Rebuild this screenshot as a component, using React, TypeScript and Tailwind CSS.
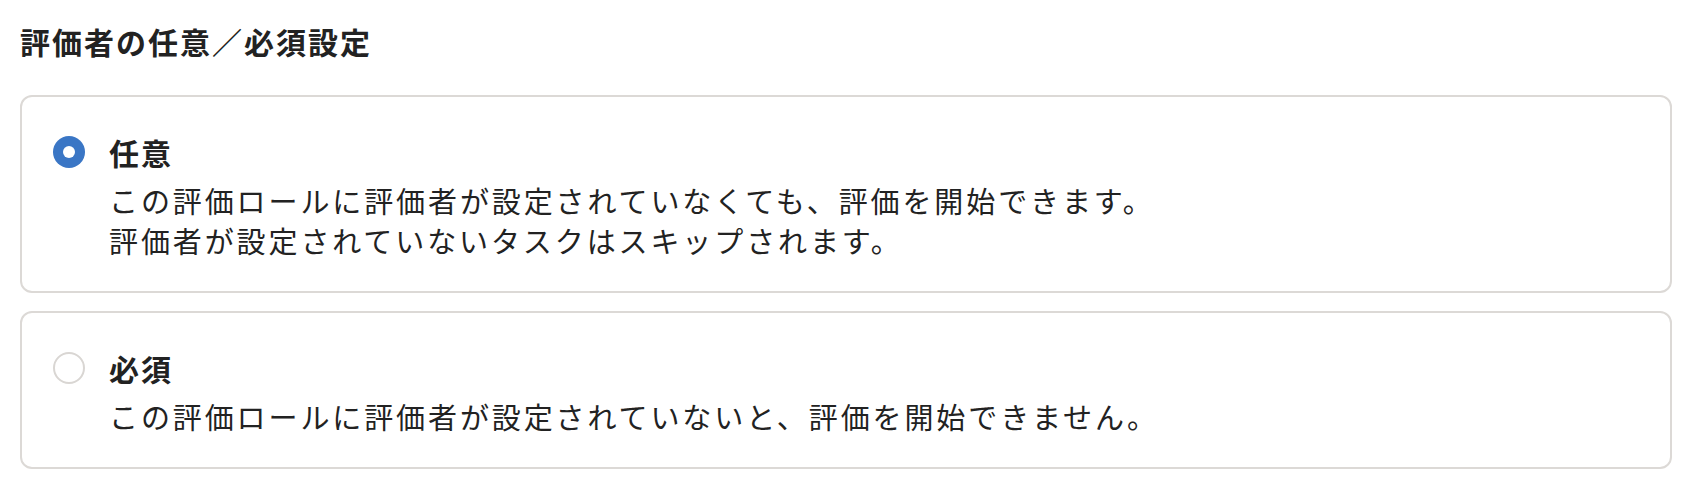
import React, { useState } from 'react';

type Option = {
  value: 'optional' | 'required';
  label: string;
  lines: string[];
};

const options: Option[] = [
  {
    value: 'optional',
    label: '任意',
    lines: [
      'この評価ロールに評価者が設定されていなくても、評価を開始できます。',
      '評価者が設定されていないタスクはスキップされます。',
    ],
  },
  {
    value: 'required',
    label: '必須',
    lines: ['この評価ロールに評価者が設定されていないと、評価を開始できません。'],
  },
];

const font = "font-['Noto_Sans_CJK_JP','Noto_Sans',sans-serif]";

const RadioDot = ({ checked }: { checked: boolean }) =>
  checked ? (
    <span className="mt-[4px] flex h-[32px] w-[32px] shrink-0 items-center justify-center rounded-full bg-[#3a76c5]">
      <span className="h-[12px] w-[12px] rounded-full bg-white" />
    </span>
  ) : (
    <span className="mt-[4px] h-[32px] w-[32px] shrink-0 rounded-full border-2 border-[#d9d6d3] bg-white" />
  );

export default function App() {
  const [value, setValue] = useState<Option['value']>('optional');

  return (
    <div className={`min-h-screen bg-white pl-[20px] pr-[30px] pt-[21px] text-[#222] ${font}`}>
      <h2 className="mb-[34px] text-[30px] font-bold leading-[40px] tracking-[2px]">
        評価者の任意／必須設定
      </h2>

      <div className="flex flex-col gap-[18px]">
        {options.map((opt) => {
          const checked = value === opt.value;
          return (
            <label
              key={opt.value}
              onClick={() => setValue(opt.value)}
              className="flex cursor-pointer gap-[24px] rounded-[12px] border-2 border-[#dcd9d6] bg-white pb-[31px] pl-[31px] pr-6 pt-[35px]"
            >
              <RadioDot checked={checked} />
              <div>
                <div className="text-[30px] font-bold leading-[40px] tracking-[2px]">{opt.label}</div>
                <div className="mt-[8px] text-[29px] leading-[40px] tracking-[2.9px]">
                  {opt.lines.map((line) => (
                    <div key={line}>{line}</div>
                  ))}
                </div>
              </div>
            </label>
          );
        })}
      </div>
    </div>
  );
}
